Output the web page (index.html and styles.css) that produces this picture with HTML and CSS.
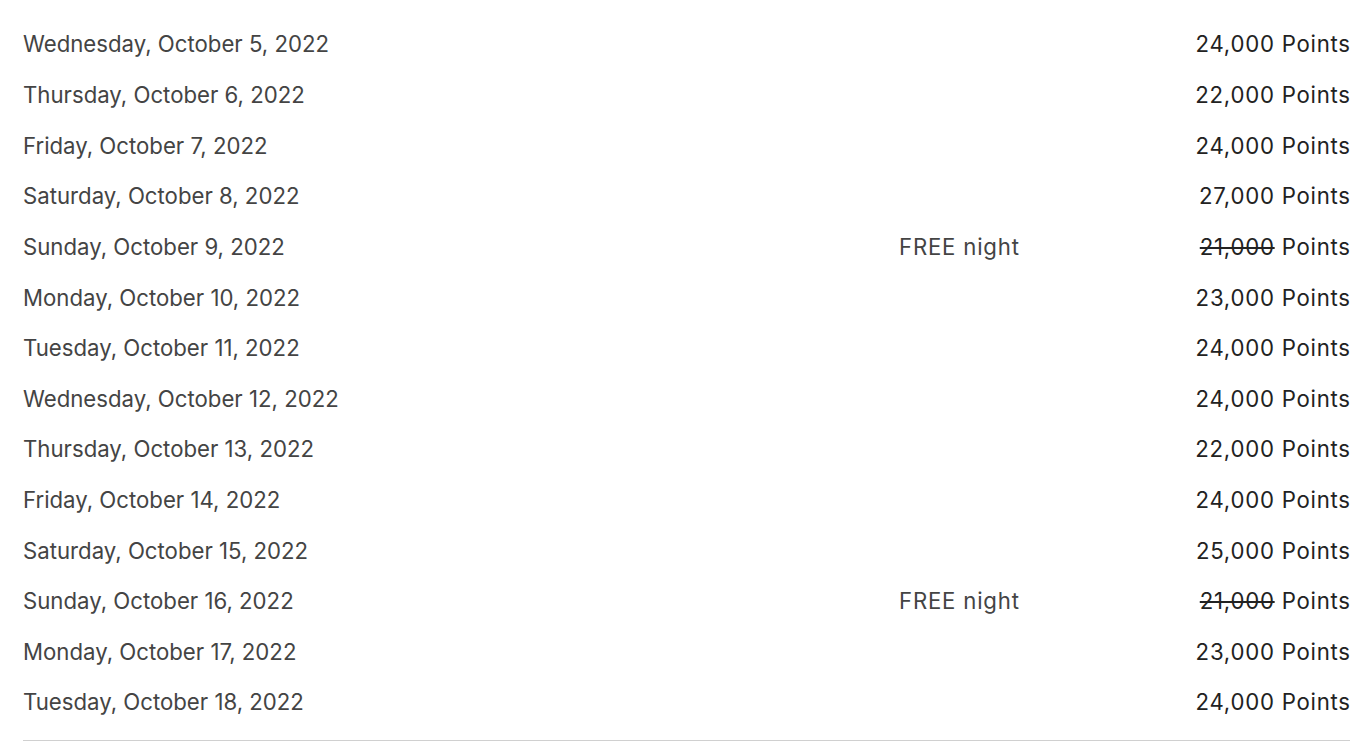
FILE: index.html
```html
<!DOCTYPE html>
<html>
<head>
<meta charset="utf-8">
<link rel="stylesheet" href="styles.css">
</head>
<body>
<div class="table">
  <div class="row"><span class="date">Wednesday, October 5, 2022</span><span class="note"></span><span class="pts">24,000 Points</span></div>
  <div class="row"><span class="date">Thursday, October 6, 2022</span><span class="note"></span><span class="pts">22,000 Points</span></div>
  <div class="row"><span class="date">Friday, October 7, 2022</span><span class="note"></span><span class="pts">24,000 Points</span></div>
  <div class="row"><span class="date">Saturday, October 8, 2022</span><span class="note"></span><span class="pts">27,000 Points</span></div>
  <div class="row"><span class="date">Sunday, October 9, 2022</span><span class="note">FREE night</span><span class="pts"><s>21,000</s> Points</span></div>
  <div class="row"><span class="date">Monday, October 10, 2022</span><span class="note"></span><span class="pts">23,000 Points</span></div>
  <div class="row"><span class="date">Tuesday, October 11, 2022</span><span class="note"></span><span class="pts">24,000 Points</span></div>
  <div class="row"><span class="date">Wednesday, October 12, 2022</span><span class="note"></span><span class="pts">24,000 Points</span></div>
  <div class="row"><span class="date">Thursday, October 13, 2022</span><span class="note"></span><span class="pts">22,000 Points</span></div>
  <div class="row"><span class="date">Friday, October 14, 2022</span><span class="note"></span><span class="pts">24,000 Points</span></div>
  <div class="row"><span class="date">Saturday, October 15, 2022</span><span class="note"></span><span class="pts">25,000 Points</span></div>
  <div class="row"><span class="date">Sunday, October 16, 2022</span><span class="note">FREE night</span><span class="pts"><s>21,000</s> Points</span></div>
  <div class="row"><span class="date">Monday, October 17, 2022</span><span class="note"></span><span class="pts">23,000 Points</span></div>
  <div class="row"><span class="date">Tuesday, October 18, 2022</span><span class="note"></span><span class="pts">24,000 Points</span></div>
</div>
</body>
</html>
```
FILE: styles.css
```css
html, body {
  margin: 0;
  padding: 0;
  background: #ffffff;
}
body {
  font-family: Inter, "Open Sans", "Liberation Sans", sans-serif;
  font-size: 22.2px;
}
.table {
  margin: 0 20px 0 23px;
  padding-top: 18.7px;
  border-bottom: 1px solid #d0d0d0;
  padding-bottom: 13px;
}
.row {
  display: grid;
  grid-template-columns: 876px 1fr auto;
  align-items: center;
  height: 50.62px;
}
.date {
  color: #444444;
}
.note {
  color: #444444;
  letter-spacing: 0.8px;
}
.pts {
  color: #222222;
  text-align: right;
  letter-spacing: 0.75px;
  margin-right: -0.75px;
}
.pts s {
  text-decoration-thickness: 1.5px;
}
```
